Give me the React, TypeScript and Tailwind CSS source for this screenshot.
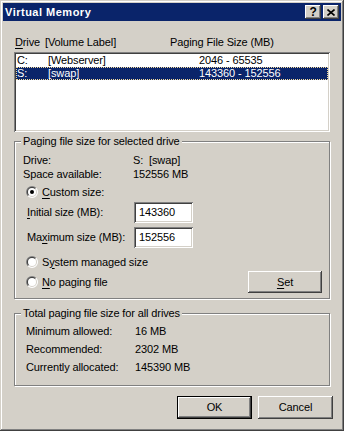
import React from "react";

const raised =
  "shadow-[inset_-1px_-1px_#404040,inset_1px_1px_#ffffff,inset_-2px_-2px_#808080,inset_2px_2px_#d4d0c8]";
const sunken =
  "shadow-[inset_1px_1px_#808080,inset_-1px_-1px_#ffffff,inset_2px_2px_#404040,inset_-2px_-2px_#d4d0c8]";

function Radio({ checked }: { checked?: boolean }) {
  const half = (r: number, tl: boolean) => {
    const o = r / Math.SQRT2;
    const x1 = 6 - o, y1 = 6 + o, x2 = 6 + o, y2 = 6 - o;
    return `M${x1} ${y1} A${r} ${r} 0 0 ${tl ? 1 : 0} ${x2} ${y2} Z`;
  };
  return (
    <svg width="12" height="12" viewBox="0 0 12 12" className="shrink-0">
      <path d={half(6, true)} fill="#808080" />
      <path d={half(6, false)} fill="#ffffff" />
      <path d={half(5, true)} fill="#404040" />
      <path d={half(5, false)} fill="#d4d0c8" />
      <circle cx="6" cy="6" r="4" fill="#ffffff" />
      {checked && <circle cx="6" cy="6" r="2" fill="#000000" />}
    </svg>
  );
}

function U({ children }: { children: React.ReactNode }) {
  return <span className="underline underline-offset-[2px]">{children}</span>;
}

export default function App() {
  return (
    <div className="w-[344px] h-[431px] bg-[#d4d0c8] p-[3px] flex flex-col text-black text-[11px] leading-[13px] tracking-[-0.12px] font-['Liberation_Sans',Arial,sans-serif] shadow-[inset_-1px_-1px_#404040,inset_1px_1px_#d4d0c8,inset_-2px_-2px_#808080,inset_2px_2px_#ffffff]">
      {/* Title bar */}
      <div className="h-[18px] bg-[#0a246a] flex items-center pl-[2px] pr-[2px]">
        <span className="text-white font-bold tracking-[0.5px]">Virtual Memory</span>
        <div className="ml-auto flex gap-[2px]">
          <div className={`w-[16px] h-[14px] bg-[#d4d0c8] ${raised} flex items-center justify-center`}>
            <span className="font-bold text-[12px] leading-[12px]">?</span>
          </div>
          <div className={`w-[16px] h-[14px] bg-[#d4d0c8] ${raised} flex items-center justify-center`}>
            <svg width="8" height="7" viewBox="0 0 8 7">
              <path d="M0.5 0.5 L7.5 6.5 M7.5 0.5 L0.5 6.5" stroke="#000" strokeWidth="1.6" />
            </svg>
          </div>
        </div>
      </div>

      {/* Content */}
      <div className="flex flex-col pl-[11px] pr-[8px]">
        {/* Header */}
        <div className="mt-[15px] h-[13px] flex pl-[1px] mr-[3px] whitespace-nowrap">
          <span className="w-[30px]"><U>D</U>rive</span>
          <span className="w-[125px]">[Volume Label]</span>
          <span>Paging File Size (MB)</span>
        </div>

        {/* List */}
        <div className={`mt-[3px] mr-[3px] h-[80px] bg-white p-[2px] ${sunken}`}>
          <div className="h-[13px] flex items-center whitespace-nowrap">
            <span className="w-[32px] pl-[1px]">C:</span>
            <span className="w-[151px]">[Webserver]</span>
            <span>2046 - 65535</span>
          </div>
          <div className="h-[13px] flex items-center whitespace-nowrap bg-[#0a246a] text-white border border-dotted border-[#f5dc9b]">
            <span className="w-[31px]">S:</span>
            <span className="w-[151px]">[swap]</span>
            <span>143360 - 152556</span>
          </div>
        </div>

        {/* Group 1 */}
        <div className="relative mt-[9px] mr-[3px] h-[158px] border border-[#808080] shadow-[inset_1px_1px_#ffffff,1px_1px_#ffffff] pt-[11px] pr-[7px]">
          <span className="absolute left-[6px] top-[-7px] px-[2px] bg-[#d4d0c8] whitespace-nowrap">
            Paging file size for selected drive
          </span>
          <div className="h-[14px] flex items-center pl-[8px] whitespace-nowrap">
            <span className="w-[110px]">Drive:</span>
            <span>S:&nbsp;&nbsp;[swap]</span>
          </div>
          <div className="h-[14px] flex items-center pl-[8px] whitespace-nowrap">
            <span className="w-[110px]">Space available:</span>
            <span>152556 MB</span>
          </div>
          <div className="mt-[4px] h-[14px] flex items-center pl-[11px] gap-[4px] whitespace-nowrap">
            <Radio checked />
            <span><U>C</U>ustom size:</span>
          </div>
          <div className="mt-[3px] h-[21px] flex items-center pl-[12px] whitespace-nowrap">
            <span className="w-[107px]"><U>I</U>nitial size (MB):</span>
            <div className={`w-[59px] h-[21px] bg-white ${sunken} flex items-center pl-[5px]`}>143360</div>
          </div>
          <div className="mt-[4px] h-[21px] flex items-center pl-[12px] whitespace-nowrap">
            <span className="w-[107px]">Ma<U>x</U>imum size (MB):</span>
            <div className={`w-[59px] h-[21px] bg-white ${sunken} flex items-center pl-[5px]`}>152556</div>
          </div>
          <div className="mt-[7px] h-[14px] flex items-center pl-[11px] gap-[4px] whitespace-nowrap">
            <Radio />
            <span>S<U>y</U>stem managed size</span>
          </div>
          <div className="mt-[2px] h-[22px] flex items-center pl-[11px] whitespace-nowrap">
            <Radio />
            <span className="ml-[4px]"><U>N</U>o paging file</span>
            <div className={`ml-auto w-[74px] h-[22px] ${raised} flex items-center justify-center`}>
              <span><U>S</U>et</span>
            </div>
          </div>
        </div>

        {/* Group 2 */}
        <div className="relative mt-[14px] mr-[3px] h-[73px] border border-[#808080] shadow-[inset_1px_1px_#ffffff,1px_1px_#ffffff] pt-[8px] pl-[11px]">
          <span className="absolute left-[6px] top-[-7px] px-[2px] bg-[#d4d0c8] whitespace-nowrap">
            Total paging file size for all drives
          </span>
          <div className="h-[18px] flex items-center whitespace-nowrap">
            <span className="w-[109px]">Minimum allowed:</span>
            <span>16 MB</span>
          </div>
          <div className="h-[18px] flex items-center whitespace-nowrap">
            <span className="w-[109px]">Recommended:</span>
            <span>2302 MB</span>
          </div>
          <div className="h-[18px] flex items-center whitespace-nowrap">
            <span className="w-[109px]">Currently allocated:</span>
            <span>145390 MB</span>
          </div>
        </div>

        {/* Buttons */}
        <div className="mt-[10px] flex justify-end gap-[6px]">
          <div className="w-[75px] h-[23px] border border-black">
            <div className={`w-full h-full ${raised} flex items-center justify-center`}>OK</div>
          </div>
          <div className={`w-[75px] h-[23px] ${raised} flex items-center justify-center`}>Cancel</div>
        </div>
      </div>
    </div>
  );
}
